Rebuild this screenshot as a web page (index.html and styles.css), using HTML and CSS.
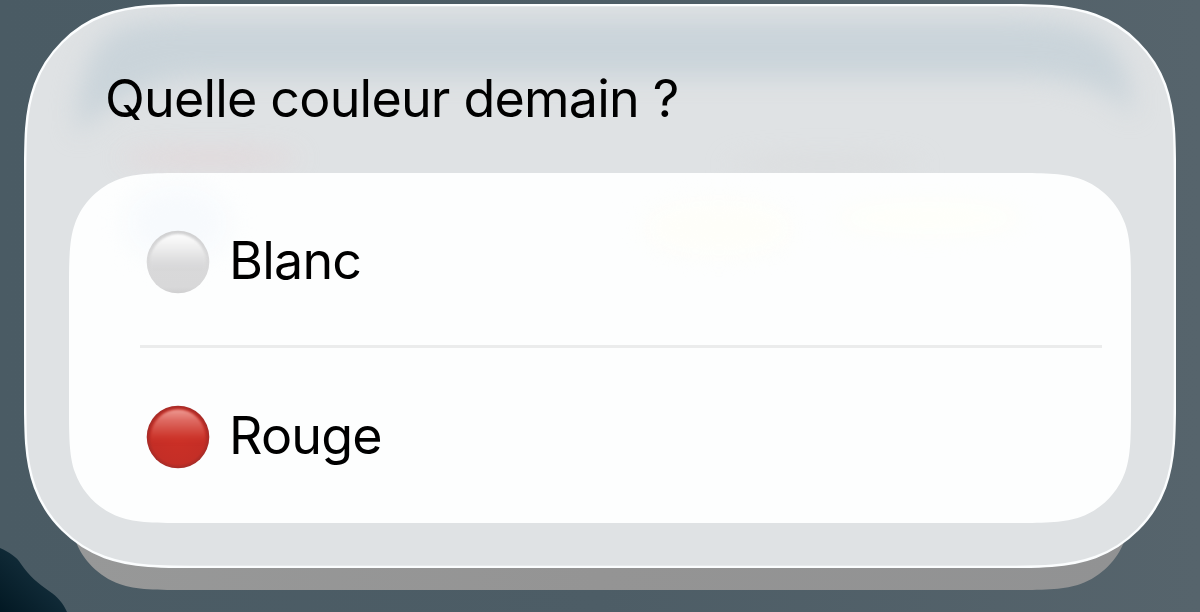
FILE: index.html
```html
<!DOCTYPE html>
<html lang="fr">
<head>
  <meta charset="UTF-8">
  <meta name="viewport" content="width=device-width, initial-scale=1.0">
  <title>Quelle couleur demain ?</title>
  <link rel="stylesheet" href="styles.css">
</head>
<body>
  <svg class="wallpaper" viewBox="0 0 1200 612" aria-hidden="true">
    <defs>
      <linearGradient id="hill" x1="1" y1="0" x2="0" y2="1">
        <stop offset="0" stop-color="#1c3947"/>
        <stop offset="1" stop-color="#021823"/>
      </linearGradient>
      <linearGradient id="sheet" x1="0" y1="0" x2="1" y2="0">
        <stop offset="0" stop-color="#979898"/>
        <stop offset="0.5" stop-color="#949494"/>
        <stop offset="1" stop-color="#919293"/>
      </linearGradient>
    </defs>
    <path fill="url(#hill)" d="M0 548C9 552 17 557 21 564C29 576 39 584 49 591C58 597 63 603 67 612H0Z"/>
    <path fill="url(#sheet)" transform="translate(69 240)" d="M122.3 0H939.7C974.9 0 995 0 1011.5 6C1032.2 13.5 1048.5 29.8 1056 50.5C1062 67 1062 87.1 1062 122.3V227.7C1062 262.9 1062 283 1056 299.5C1048.5 320.2 1032.2 336.5 1011.5 344C995 350 974.9 350 939.7 350H122.3C87.1 350 67 350 50.5 344C29.8 336.5 13.5 320.2 6 299.5C0 283 0 262.9 0 227.7V122.3C0 87.1 0 67 6 50.5C13.5 29.8 29.8 13.5 50.5 6C67 0 87.1 0 122.3 0Z"/>
  </svg>

  <div class="dialog">
    <svg class="shape" viewBox="0 0 1152 564" aria-hidden="true">
      <defs>
        <path id="glass" d="M186.5 0H963.5C1017.2 0 1043 0 1070.5 10C1102 21.5 1128.5 48 1140 79.5C1150 107 1150 132.8 1150 186.5V375.5C1150 429.2 1150 455 1140 482.5C1128.5 514 1102 540.5 1070.5 552C1043 562 1017.2 562 963.5 562H186.5C132.8 562 107 562 79.5 552C48 540.5 21.5 514 10 482.5C0 455 0 429.2 0 375.5V186.5C0 132.8 0 107 10 79.5C21.5 48 48 21.5 79.5 10C107 0 132.8 0 186.5 0Z"/>
        <clipPath id="glassClip"><use href="#glass"/></clipPath>
        <filter id="blur" x="-40%" y="-150%" width="180%" height="400%" color-interpolation-filters="sRGB"><feGaussianBlur stdDeviation="12"/></filter>
      </defs>
      <g transform="translate(1 1)">
        <use href="#glass" fill="#dfe2e4"/>
        <g clip-path="url(#glassClip)">
          <path filter="url(#blur)" fill="#cad4da" d="M84 28Q110 14 160 14H985Q1050 14 1080 34Q1106 56 1108 112Q1085 78 1010 72H180Q100 76 52 130Q50 60 84 28Z"/>
          <ellipse filter="url(#blur)" cx="185" cy="153" rx="90" ry="9" fill="#e3d5d7" opacity="0.8"/>
          <ellipse filter="url(#blur)" cx="800" cy="160" rx="100" ry="10" fill="#d9dadb" opacity="0.6"/>
        </g>
        <use href="#glass" fill="none" stroke="#fbfdfe" stroke-width="2.4"/>
      </g>
    </svg>

    <h1 class="title">Quelle couleur demain ?</h1>

    <div class="choices">
      <svg class="shape" viewBox="0 0 1062 350" aria-hidden="true">
        <defs>
          <path id="panel" d="M122.3 0H939.7C974.9 0 995 0 1011.5 6C1032.2 13.5 1048.5 29.8 1056 50.5C1062 67 1062 87.1 1062 122.3V227.7C1062 262.9 1062 283 1056 299.5C1048.5 320.2 1032.2 336.5 1011.5 344C995 350 974.9 350 939.7 350H122.3C87.1 350 67 350 50.5 344C29.8 336.5 13.5 320.2 6 299.5C0 283 0 262.9 0 227.7V122.3C0 87.1 0 67 6 50.5C13.5 29.8 29.8 13.5 50.5 6C67 0 87.1 0 122.3 0Z"/>
          <clipPath id="panelClip"><use href="#panel"/></clipPath>
        </defs>
        <use href="#panel" fill="#fdfefe"/>
        <g clip-path="url(#panelClip)">
          <g filter="url(#blur)">
            <ellipse cx="108" cy="50" rx="52" ry="38" fill="#f7fafd"/>
            <ellipse cx="650" cy="55" rx="75" ry="28" fill="#fefef9"/>
            <ellipse cx="860" cy="45" rx="95" ry="16" fill="#fefff9"/>
          </g>
        </g>
      </svg>

      <button class="choice">
        <svg class="dot" viewBox="0 0 64 64" aria-hidden="true">
          <defs>
            <filter id="soft" color-interpolation-filters="sRGB"><feGaussianBlur stdDeviation="1.2"/></filter>
            <linearGradient id="white" x1="0" y1="0" x2="0" y2="1">
              <stop offset="0" stop-color="#d0d0d1"/>
              <stop offset="0.4" stop-color="#d9d9da"/>
              <stop offset="0.9" stop-color="#d8d8d9"/>
              <stop offset="1" stop-color="#cfcfd0"/>
            </linearGradient>
            <linearGradient id="whiteShine" x1="0" y1="0" x2="0" y2="1">
              <stop offset="0" stop-color="#fdfdfd"/>
              <stop offset="0.2" stop-color="#f1f1f1"/>
              <stop offset="0.5" stop-color="#dcdcdd"/>
              <stop offset="0.65" stop-color="#d9d9da" stop-opacity="0"/>
            </linearGradient>
          </defs>
          <circle cx="32" cy="32" r="31.3" fill="url(#white)"/>
          <circle cx="32" cy="32" r="28" fill="url(#whiteShine)" filter="url(#soft)"/>
        </svg>
        <span class="label">Blanc</span>
      </button>
      <button class="choice">
        <svg class="dot" viewBox="0 0 64 64" aria-hidden="true">
          <defs>
            <radialGradient id="red" cx="0.5" cy="0.5" r="0.5">
              <stop offset="0" stop-color="#cc3026"/>
              <stop offset="0.86" stop-color="#c42e26"/>
              <stop offset="1" stop-color="#a52b27"/>
            </radialGradient>
            <linearGradient id="redShine" x1="0" y1="0" x2="0" y2="1">
              <stop offset="0" stop-color="#ee9a92"/>
              <stop offset="0.2" stop-color="#de6a62"/>
              <stop offset="0.45" stop-color="#d04036"/>
              <stop offset="0.65" stop-color="#cc3026" stop-opacity="0"/>
            </linearGradient>
          </defs>
          <circle cx="32" cy="32" r="31.3" fill="url(#red)"/>
          <circle cx="32" cy="31.5" r="27" fill="url(#redShine)" filter="url(#soft)"/>
        </svg>
        <span class="label">Rouge</span>
      </button>
    </div>
  </div>
</body>
</html>
```

FILE: styles.css
```css
* {
  box-sizing: border-box;
}

body {
  margin: 0;
  height: 612px;
  padding: 4px 24px 0;
  overflow: hidden;
  position: relative;
  font-family: Inter, "Liberation Sans", sans-serif;
  color: #000;
  background: linear-gradient(90deg, #4a5b64 0%, #4d5d66 50%, #56646c 100%);
}

.wallpaper,
.shape {
  position: absolute;
  top: 0;
  left: 0;
  width: 100%;
  height: 100%;
}

.dialog {
  position: relative;
  height: 564px;
  padding: 0 45px;
}

.title {
  position: relative;
  margin: 0;
  height: 169px;
  padding: 63px 0 0 36px;
  font-size: 52px;
  line-height: 64px;
  font-weight: 400;
  letter-spacing: -0.8px;
  white-space: nowrap;
}

.choices {
  position: relative;
  height: 350px;
  padding: 0 29px 0 71px;
}

.choice {
  position: relative;
  display: flex;
  align-items: center;
  gap: 19px;
  width: 100%;
  height: 175px;
  padding: 2px 6px 0;
  border: none;
  background: none;
  font: inherit;
  color: inherit;
  text-align: left;
}

.choice:first-of-type {
  padding-top: 5px;
  border-bottom: 3px solid #ebecec;
}

.dot {
  width: 64px;
  height: 64px;
}

.label {
  padding-bottom: 1px;
  font-size: 52px;
  line-height: 64px;
  letter-spacing: -0.8px;
}
```
